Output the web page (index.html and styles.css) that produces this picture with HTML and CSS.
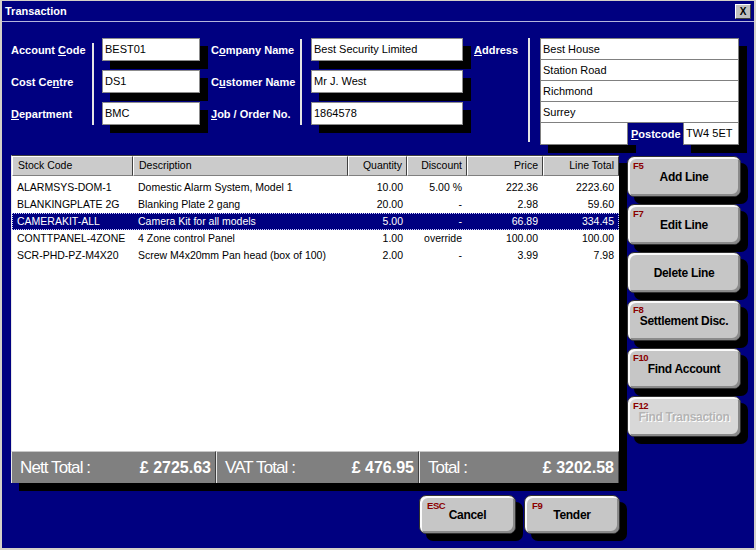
FILE: index.html
```html
<!DOCTYPE html>
<html>
<head>
<meta charset="utf-8">
<title>Transaction</title>
<link rel="stylesheet" href="styles.css">
</head>
<body>
<div class="window">
  <div class="titlebar">
    <span class="title">Transaction</span>
    <span class="close">X</span>
  </div>
  <div class="content">
    <div class="form">
      <div class="group g1">
        <div class="labels">
          <div class="lbl">Account <u>C</u>ode</div>
          <div class="lbl">Cost Ce<u>n</u>tre</div>
          <div class="lbl"><u>D</u>epartment</div>
        </div>
        <div class="sep"></div>
        <div class="fields">
          <div class="inp">BEST01</div>
          <div class="inp">DS1</div>
          <div class="inp">BMC</div>
        </div>
      </div>
      <div class="group g2">
        <div class="labels">
          <div class="lbl">C<u>o</u>mpany Name</div>
          <div class="lbl">C<u>u</u>stomer Name</div>
          <div class="lbl"><u>J</u>ob / Order No.</div>
        </div>
        <div class="sep"></div>
        <div class="fields">
          <div class="inp">Best Security Limited</div>
          <div class="inp">Mr J. West</div>
          <div class="inp">1864578</div>
        </div>
      </div>
      <div class="group g3">
        <div class="labels">
          <div class="lbl"><u>A</u>ddress</div>
        </div>
        <div class="sep"></div>
        <div class="addr">
          <div class="astack">
            <div class="aline">Best House</div>
            <div class="aline">Station Road</div>
            <div class="aline">Richmond</div>
            <div class="aline">Surrey</div>
          </div>
          <div class="arow">
            <div class="abox"></div>
            <div class="plbl"><u>P</u>ostcode</div>
            <div class="pbox">TW4 5ET</div>
          </div>
        </div>
      </div>
    </div>

    <div class="main">
      <div class="gridwrap">
        <div class="grid">
          <div class="ghead">
            <div class="hc">Stock Code</div>
            <div class="hc">Description</div>
            <div class="hc r">Quantity</div>
            <div class="hc r">Discount</div>
            <div class="hc r">Price</div>
            <div class="hc r">Line Total</div>
          </div>
          <div class="rows">
            <div class="row">
              <div class="c">ALARMSYS-DOM-1</div>
              <div class="c">Domestic Alarm System, Model 1</div>
              <div class="c r q">10.00</div>
              <div class="c r">5.00 %</div>
              <div class="c r">222.36</div>
              <div class="c r">2223.60</div>
            </div>
            <div class="row">
              <div class="c">BLANKINGPLATE 2G</div>
              <div class="c">Blanking Plate 2 gang</div>
              <div class="c r q">20.00</div>
              <div class="c r">-</div>
              <div class="c r">2.98</div>
              <div class="c r">59.60</div>
            </div>
            <div class="row sel">
              <div class="c">CAMERAKIT-ALL</div>
              <div class="c">Camera Kit for all models</div>
              <div class="c r q">5.00</div>
              <div class="c r">-</div>
              <div class="c r">66.89</div>
              <div class="c r">334.45</div>
            </div>
            <div class="row">
              <div class="c">CONTTPANEL-4ZONE</div>
              <div class="c">4 Zone control Panel</div>
              <div class="c r q">1.00</div>
              <div class="c r">override</div>
              <div class="c r">100.00</div>
              <div class="c r">100.00</div>
            </div>
            <div class="row">
              <div class="c">SCR-PHD-PZ-M4X20</div>
              <div class="c">Screw M4x20mm Pan head (box of 100)</div>
              <div class="c r q">2.00</div>
              <div class="c r">-</div>
              <div class="c r">3.99</div>
              <div class="c r">7.98</div>
            </div>
          </div>
        </div>
        <div class="totals">
          <div class="tcell"><span class="tl">Nett Total :</span><span class="tv">£ 2725.63</span></div>
          <div class="tcell"><span class="tl">VAT Total :</span><span class="tv">£ 476.95</span></div>
          <div class="tcell"><span class="tl">Total :</span><span class="tv">£ 3202.58</span></div>
        </div>
      </div>

      <div class="side">
        <div class="btn"><span class="fk">F5</span>Add Line</div>
        <div class="btn"><span class="fk">F7</span>Edit Line</div>
        <div class="btn">Delete Line</div>
        <div class="btn"><span class="fk">F8</span>Settlement Disc.</div>
        <div class="btn"><span class="fk">F10</span>Find Account</div>
        <div class="btn disabled"><span class="fk">F12</span>Find Transaction</div>
      </div>
    </div>

    <div class="bottom">
      <div class="btn bb cancel"><span class="fk">ESC</span>Cancel</div>
      <div class="btn bb tender"><span class="fk">F9</span>Tender</div>
    </div>
  </div>
</div>
</body>
</html>
```

FILE: styles.css
```css
* { box-sizing: border-box; margin: 0; padding: 0; }

html, body {
  width: 756px;
  height: 550px;
  overflow: hidden;
  background: #000080;
  font-family: "Liberation Sans", Arial, sans-serif;
}

.window {
  width: 756px;
  height: 550px;
  background: #000080;
  border-top: 1px solid #d4d0c8;
  border-left: 2px solid #d4d0c8;
  border-right: 2px solid #d4d0c8;
  border-bottom: 2px solid #d4d0c8;
}

.titlebar {
  height: 21px;
  display: flex;
  align-items: center;
  justify-content: space-between;
  padding: 0 3px 0 3px;
  border-bottom: 1px solid #b4b4dc;
  color: #fff;
  font-weight: bold;
  font-size: 11px;
}

.close {
  width: 16px;
  height: 15px;
  background: #c0c0c0;
  color: #000;
  font-size: 10px;
  font-weight: bold;
  text-align: center;
  line-height: 13px;
  border-top: 1px solid #fff;
  border-left: 1px solid #fff;
  border-right: 1px solid #404040;
  border-bottom: 1px solid #404040;
}

.content {
  padding: 16px 0 0 9px;
}

/* ---------- top form ---------- */
.form {
  display: flex;
  height: 107px;
}

.group { display: flex; }

.labels {
  display: flex;
  flex-direction: column;
  gap: 9px;
  padding-top: 1px;
}

.lbl {
  height: 23px;
  line-height: 23px;
  font-weight: bold;
  font-size: 11px;
  color: #fff;
  white-space: nowrap;
}

.sep {
  width: 2px;
  background: #e4e4e4;
}

.fields {
  display: flex;
  flex-direction: column;
  gap: 9px;
}

.inp {
  height: 23px;
  background: #fff;
  border: 1px solid #8c8c8c;
  font-size: 11px;
  line-height: 21px;
  padding-left: 2px;
  color: #000;
  box-shadow: 8px 8px 0 #000;
}

.g1 .labels { width: 81px; }
.g1 .sep { margin-top: 5px; height: 82px; }
.g1 .fields { margin-left: 8px; width: 98px; }

.g2 { margin-left: 11px; }
.g2 .labels { width: 89px; }
.g2 .sep { margin-top: 1px; height: 86px; }
.g2 .fields { margin-left: 9px; width: 152px; }

.g3 { margin-left: 11px; }
.g3 .labels { width: 54px; }
.g3 .sep { margin-top: 0; height: 104px; }

.addr {
  margin-left: 10px;
  width: 199px;
  display: flex;
  flex-direction: column;
}

.astack {
  border: 1px solid #808080;
  border-bottom: none;
  background: #fff;
  box-shadow: 8px 8px 0 #000;
}

.aline {
  height: 21px;
  border-bottom: 1px solid #808080;
  font-size: 11px;
  line-height: 20px;
  padding-left: 2px;
  color: #000;
}

.arow {
  display: flex;
  height: 22px;
}

.abox {
  width: 88px;
  background: #fff;
  border: 1px solid #808080;
  border-top: none;
  box-shadow: 8px 8px 0 #000;
}

.plbl {
  width: 55px;
  background: #000080;
  color: #fff;
  font-weight: bold;
  font-size: 11px;
  line-height: 22px;
  padding-left: 3px;
  position: relative;
}

.pbox {
  width: 56px;
  background: #fff;
  border: 1px solid #808080;
  border-top: none;
  font-size: 11px;
  line-height: 20px;
  padding-left: 2px;
  color: #000;
  box-shadow: 8px 8px 0 #000;
}

/* ---------- main ---------- */
.main {
  display: flex;
  margin-top: 10px;
}

.gridwrap {
  width: 608px;
  height: 328px;
  display: flex;
  flex-direction: column;
  box-shadow: 8px 8px 0 #000;
}

.grid {
  flex: 1;
  background: #fff;
  border-left: 1px solid #e8e8e8;
  border-top: 1px solid #404040;
}

.ghead, .row {
  display: grid;
  grid-template-columns: 121px 215px 59px 60px 76px 1fr;
}

.ghead {
  height: 20px;
}

.hc {
  background: #cbcbcb;
  border-top: 1px solid #fff;
  border-left: 1px solid #fff;
  border-right: 1px solid #404040;
  border-bottom: 1px solid #808080;
  font-size: 10.5px;
  line-height: 17px;
  padding: 0 4px 0 5px;
  color: #000;
  white-space: nowrap;
}

.r { text-align: right; }

.rows {
  padding-top: 3px;
}

.row {
  height: 17px;
  font-size: 10.5px;
  line-height: 17px;
  color: #000;
}

.c {
  padding: 0 5px;
  white-space: nowrap;
  overflow: hidden;
}

.c.q { padding-right: 4px; }

.row.sel {
  background: #000080;
  color: #fff;
  outline: 1px dotted #d0d0ff;
  outline-offset: -1px;
}

.totals {
  height: 32px;
  display: grid;
  grid-template-columns: 205px 203px 1fr;
  background: #808080;
}

.tcell {
  display: flex;
  align-items: center;
  justify-content: space-between;
  padding: 0 4px 0 8px;
  border-top: 1px solid #c8c8c8;
  border-left: 1px solid #e8e8e8;
  border-right: 1px solid #404040;
  color: #fff;
}

.tl {
  font-size: 17px;
  letter-spacing: -0.9px;
}

.tv {
  font-size: 16px;
  font-weight: bold;
}

/* ---------- buttons ---------- */
.side {
  display: flex;
  flex-direction: column;
  gap: 7px;
  margin-left: 8px;
  padding-top: 1px;
  width: 114px;
}

.btn {
  position: relative;
  height: 41px;
  background: #c6c6c6;
  border: 1px solid #303030;
  border-radius: 7px;
  box-shadow: inset 2px 2px 0 #fafafa, inset -2px -2px 0 #8a8a8a, 7px 7px 0 #000;
  display: flex;
  align-items: center;
  justify-content: center;
  font-weight: bold;
  font-size: 12px;
  letter-spacing: -0.3px;
  color: #000;
  white-space: nowrap;
}

.fk {
  position: absolute;
  top: 4px;
  left: 5px;
  font-size: 9.5px;
  font-weight: bold;
  color: #8b0000;
  letter-spacing: -0.4px;
  line-height: 10px;
}

.btn.disabled {
  background: #d8d8d8;
  color: #b4b4b4;
  text-shadow: 1px 1px 0 #fff;
}

.btn.disabled .fk { text-shadow: none; }

.bottom {
  display: flex;
  gap: 8px;
  margin-top: 12px;
  margin-left: 408px;
}

.btn.bb { height: 39px; }
.cancel { width: 97px; }
.tender { width: 96px; }
.bb .fk { top: 5px; left: 7px; }
```
